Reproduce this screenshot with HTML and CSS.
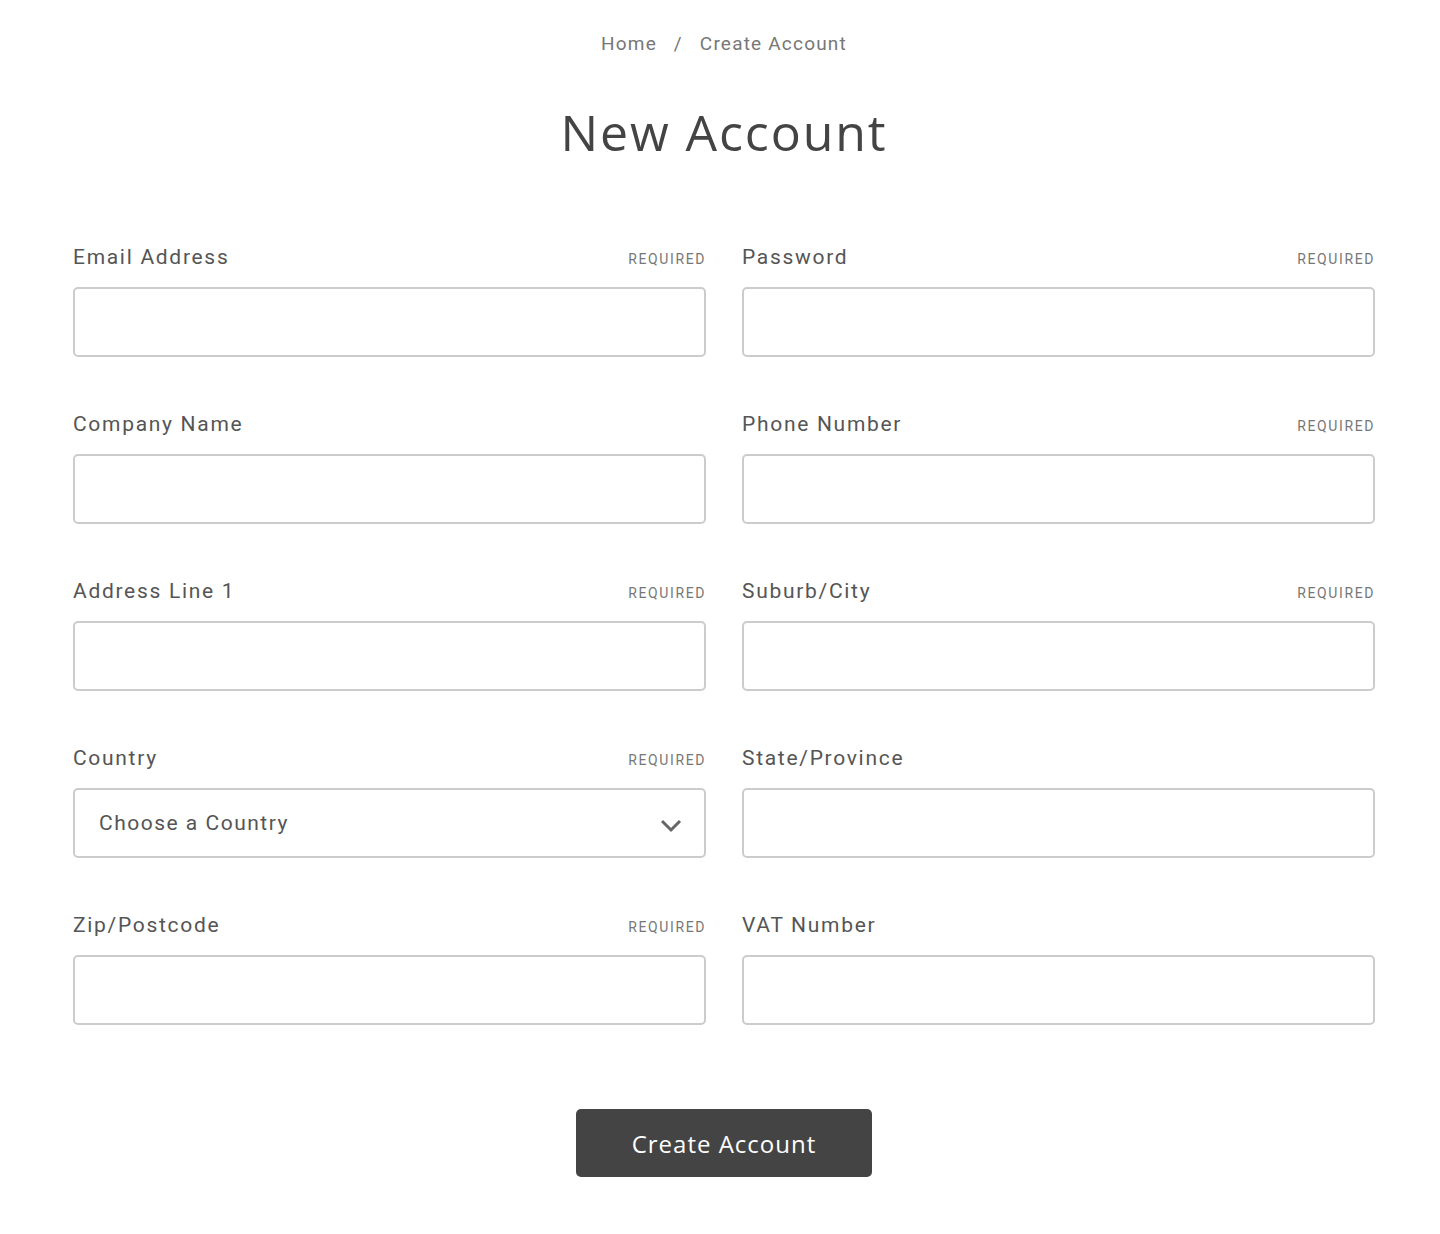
FILE: index.html
```html
<!DOCTYPE html>
<html lang="en">
<head>
    <meta charset="UTF-8">
    <meta name="viewport" content="width=device-width, initial-scale=1.0">
    <title>Create Account</title>
    <link rel="stylesheet" href="styles.css">
</head>
<body>
    <div class="page">
        <nav class="breadcrumbs">
            <a href="#">Home</a>
            <span class="sep">/</span>
            <span>Create Account</span>
        </nav>

        <h1 class="page-title">New Account</h1>

        <form class="account-form">
            <div class="field">
                <div class="field-head"><label>Email Address</label><small>Required</small></div>
                <input type="email" class="form-input">
            </div>
            <div class="field">
                <div class="field-head"><label>Password</label><small>Required</small></div>
                <input type="password" class="form-input">
            </div>
            <div class="field">
                <div class="field-head"><label>Company Name</label></div>
                <input type="text" class="form-input">
            </div>
            <div class="field">
                <div class="field-head"><label>Phone Number</label><small>Required</small></div>
                <input type="text" class="form-input">
            </div>
            <div class="field">
                <div class="field-head"><label>Address Line 1</label><small>Required</small></div>
                <input type="text" class="form-input">
            </div>
            <div class="field">
                <div class="field-head"><label>Suburb/City</label><small>Required</small></div>
                <input type="text" class="form-input">
            </div>
            <div class="field">
                <div class="field-head"><label>Country</label><small>Required</small></div>
                <div class="select-wrap">
                    <select class="form-input form-select">
                        <option>Choose a Country</option>
                    </select>
                    <svg class="chevron" width="22" height="14" viewBox="0 0 22 14"><path d="M2 2 L11 11 L20 2" fill="none" stroke="#666" stroke-width="3"/></svg>
                </div>
            </div>
            <div class="field">
                <div class="field-head"><label>State/Province</label></div>
                <input type="text" class="form-input">
            </div>
            <div class="field">
                <div class="field-head"><label>Zip/Postcode</label><small>Required</small></div>
                <input type="text" class="form-input">
            </div>
            <div class="field">
                <div class="field-head"><label>VAT Number</label></div>
                <input type="text" class="form-input">
            </div>

            <div class="form-actions">
                <button type="submit" class="button-primary">Create Account</button>
            </div>
        </form>
    </div>
</body>
</html>
```

FILE: styles.css
```css
body {
    margin: 0;
    background: #fff;
    color: #555;
    font-family: Roboto, Arial, sans-serif;
}
.page {
    width: 1302px;
    margin-left: 73px;
    padding-top: 32px;
}
.breadcrumbs {
    text-align: center;
    font-size: 19px;
    line-height: 24px;
    color: #777;
    letter-spacing: 1.2px;
}
.breadcrumbs a {
    color: #777;
    text-decoration: none;
}
.breadcrumbs .sep {
    margin: 0 11px;
}
.page-title {
    margin: 46px 0 0;
    text-align: center;
    font-family: "Open Sans", Arial, sans-serif;
    font-weight: 400;
    font-size: 50px;
    line-height: 60px;
    color: #444;
    letter-spacing: 1.9px;
}
.account-form {
    margin-top: 82px;
    display: grid;
    grid-template-columns: 1fr 1fr;
    column-gap: 36px;
    row-gap: 54px;
}
.field-head {
    display: flex;
    justify-content: space-between;
    align-items: baseline;
    height: 26px;
    margin-bottom: 17px;
}
.field-head label {
    font-size: 21px;
    line-height: 26px;
    color: #555;
    letter-spacing: 1.7px;
}
.field-head small {
    font-size: 14px;
    text-transform: uppercase;
    letter-spacing: 1.6px;
    color: #777;
}
.form-input {
    display: block;
    width: 100%;
    height: 70px;
    box-sizing: border-box;
    border: 2px solid #ccc;
    border-radius: 5px;
    background: #fff;
    padding: 0 24px;
    font-family: Roboto, Arial, sans-serif;
    font-size: 21px;
    color: #555;
}
.select-wrap {
    position: relative;
}
.form-select {
    appearance: none;
    -webkit-appearance: none;
    letter-spacing: 1.5px;
}
.chevron {
    position: absolute;
    right: 24px;
    top: 31px;
}
.form-actions {
    grid-column: 1 / -1;
    display: flex;
    justify-content: center;
    margin-top: 30px;
}
.button-primary {
    width: 296px;
    height: 68px;
    background: #444;
    color: #fff;
    border: none;
    border-radius: 5px;
    font-family: "Open Sans", Arial, sans-serif;
    font-size: 24px;
    letter-spacing: 1px;
    cursor: pointer;
}
```
